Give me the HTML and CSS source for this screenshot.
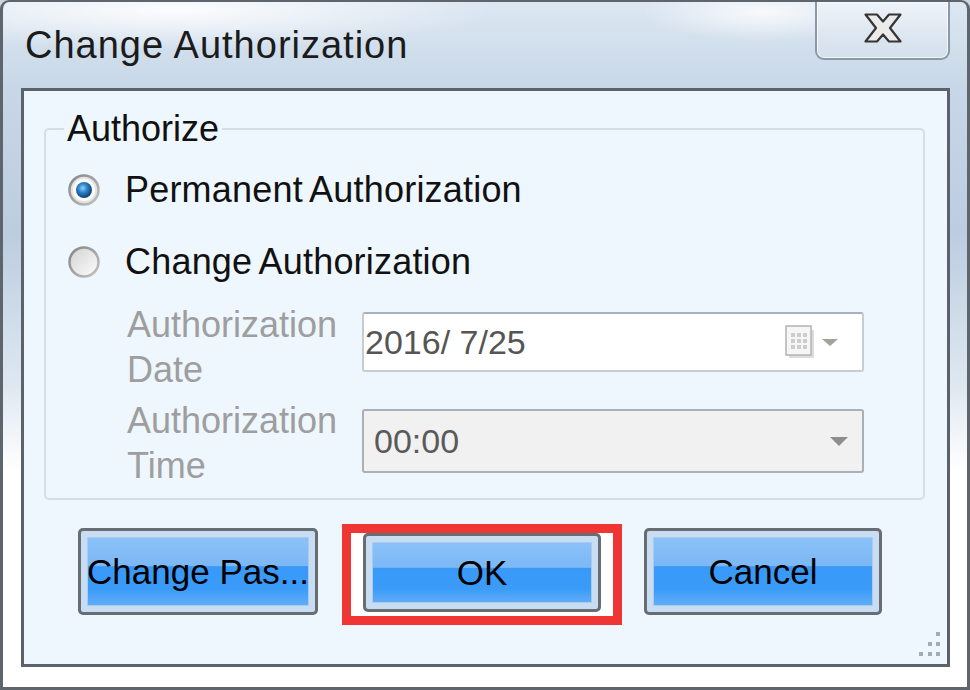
FILE: index.html
```html
<!DOCTYPE html>
<html lang="en">
<head>
  <meta charset="UTF-8">
  <title>Change Authorization</title>
  <link rel="stylesheet" href="styles.css">
</head>
<body>
  <div class="window">
    <div class="titlebar">
      <div class="title">Change Authorization</div>
      <div class="close">
        <svg width="38" height="30" viewBox="0 0 38 30">
          <polygon points="1.5,1.5 13,1.5 19,8.5 25,1.5 36.5,1.5 26,15 36.5,28.5 25,28.5 19,21.5 13,28.5 1.5,28.5 12,15" fill="#ebebeb" stroke="#353535" stroke-width="2.2" stroke-linejoin="round"/>
        </svg>
      </div>
    </div>

    <div class="client">
      <fieldset class="group">
        <legend>Authorize</legend>

        <div class="option first">
          <svg class="radio" width="32" height="32" viewBox="0 0 32 32">
            <defs>
              <radialGradient id="dot" cx="42%" cy="38%" r="65%">
                <stop offset="0" stop-color="#8fd0f8"/>
                <stop offset=".45" stop-color="#2a80c9"/>
                <stop offset="1" stop-color="#0e3a6c"/>
              </radialGradient>
              <linearGradient id="ring" x1="0" y1="0" x2="1" y2="1">
                <stop offset="0" stop-color="#858585"/>
                <stop offset="1" stop-color="#c2c2c2"/>
              </linearGradient>
            </defs>
            <circle cx="16" cy="16" r="14.5" fill="#e4e4e4" stroke="url(#ring)" stroke-width="2.5"/>
            <circle cx="16" cy="16" r="11" fill="#fbfbfb"/>
            <circle cx="16" cy="16" r="8" fill="url(#dot)"/>
          </svg>
          <span>Permanent Authorization</span>
        </div>

        <div class="option second">
          <svg class="radio" width="32" height="32" viewBox="0 0 32 32">
            <defs>
              <linearGradient id="fill" x1="0" y1="0" x2="1" y2="1">
                <stop offset="0" stop-color="#d2d2d2"/>
                <stop offset="1" stop-color="#fdfdfd"/>
              </linearGradient>
            </defs>
            <circle cx="16" cy="16" r="14.5" fill="url(#fill)" stroke="url(#ring)" stroke-width="2.5"/>
          </svg>
          <span>Change Authorization</span>
        </div>

        <div class="fields">
          <div class="label label-date">Authorization Date</div>
          <div class="date">
            <span class="value">2016/ 7/25</span>
            <svg class="cal" width="30" height="34" viewBox="0 0 30 34">
              <rect x="4" y="5" width="25" height="28" fill="#dcdcdc"/>
              <rect x="1" y="1" width="25" height="29" fill="#f6f6f6" stroke="#b3b3b3" stroke-width="1.5"/>
              <g fill="#cdcdcd">
                <rect x="6" y="8" width="4" height="4"/><rect x="12" y="8" width="4" height="4"/><rect x="18" y="8" width="4" height="4"/>
                <rect x="6" y="14" width="4" height="4"/><rect x="12" y="14" width="4" height="4"/><rect x="18" y="14" width="4" height="4"/>
                <rect x="6" y="20" width="4" height="4"/><rect x="12" y="20" width="4" height="4"/><rect x="18" y="20" width="4" height="4"/>
              </g>
            </svg>
            <svg class="arrow-small" width="16" height="7" viewBox="0 0 16 7">
              <polygon points="0,0 16,0 8,7" fill="#a3a39a"/>
            </svg>
          </div>

          <div class="label">Authorization Time</div>
          <div class="time">
            <span class="value">00:00</span>
            <svg width="18" height="9" viewBox="0 0 18 9">
              <polygon points="0,0 18,0 9,9" fill="#8e8e8e"/>
            </svg>
          </div>
        </div>
      </fieldset>

      <div class="actions">
        <button class="btn">Change Pas...</button>
        <div class="mark">
          <button class="btn btn-ok">OK</button>
        </div>
        <button class="btn btn-cancel">Cancel</button>
      </div>

      <svg class="grip" width="22" height="24" viewBox="0 0 22 24">
        <g fill="#a3abb3">
          <rect x="17" y="0" width="4" height="4"/>
          <rect x="9" y="10" width="4" height="4"/><rect x="17" y="10" width="4" height="4"/>
          <rect x="0" y="20" width="4" height="4"/><rect x="9" y="20" width="4" height="4"/><rect x="17" y="20" width="4" height="4"/>
        </g>
      </svg>
    </div>
  </div>
</body>
</html>
```

FILE: styles.css
```css
body {
  margin: 0;
  font-family: "Liberation Sans", Arial, sans-serif;
  background: #c8d6e5;
}

.window {
  box-sizing: border-box;
  width: 970px;
  height: 690px;
  border: 3px solid #5e656c;
  border-top-width: 2px;
  border-radius: 9px 9px 0 0;
  background:
    radial-gradient(ellipse 320px 40px at 170px 8px, rgba(255,255,255,.9), rgba(255,255,255,0)),
    radial-gradient(ellipse 120px 30px at 760px 10px, rgba(255,255,255,.8), rgba(255,255,255,0)),
    linear-gradient(#dce7f2 0, #c7d7e7 88px, #bccde0 230px, #dde7f1 380px, #ffffff 470px);
  display: flex;
  flex-direction: column;
}

/* title bar */
.titlebar {
  height: 86px;
  display: flex;
  justify-content: space-between;
  align-items: flex-start;
}

.title {
  margin: 22px 0 0 22px;
  font-size: 38px;
  line-height: 42px;
  letter-spacing: 1px;
  color: #1b1b1b;
}

.close {
  box-sizing: border-box;
  width: 135px;
  height: 58px;
  margin-right: 17px;
  padding-bottom: 4px;
  border: 2px solid #8b99a7;
  border-top: 0;
  border-radius: 0 0 9px 9px;
  background: linear-gradient(#edf3f9, #d3dfec);
  box-shadow: inset 0 0 0 1px rgba(255,255,255,.7);
  display: flex;
  align-items: center;
  justify-content: center;
}

/* client area */
.client {
  position: relative;
  box-sizing: border-box;
  height: 579px;
  margin: 0 17px 0 18px;
  border: 3px solid #5b6269;
  background: #eef6fe;
}

.group {
  box-sizing: border-box;
  width: 881px;
  margin: 20px 0 0 20px;
  padding: 0 0 10px;
  border: 2px solid #d5dde5;
  border-radius: 5px;
}

legend {
  margin-left: 18px;
  padding: 0 3px;
  font-size: 36px;
  line-height: 36px;
  color: #111;
}

.option {
  display: flex;
  align-items: center;
  height: 40px;
  margin-left: 22px;
  font-size: 36px;
  word-spacing: -2px;
  letter-spacing: 0.2px;
  color: #111;
}

.option.first {
  margin-top: 23px;
}

.option.second {
  margin-top: 32px;
}

.radio {
  margin-right: 25px;
  flex-shrink: 0;
}

.fields {
  display: grid;
  grid-template-columns: 235px 502px;
  align-items: start;
  margin: 20px 0 0 81px;
}

.label {
  font-size: 36px;
  line-height: 45px;
  height: 90px;
  color: #9e9e9e;
}

.label-date {
  height: 96px;
}

.date {
  box-sizing: border-box;
  height: 60px;
  margin-top: 10px;
  padding: 0 24px 0 1px;
  background: #fff;
  border: 2px solid #c6ccd2;
  border-top-color: #aab2b9;
  border-radius: 3px;
  display: flex;
  align-items: center;
  font-size: 34px;
  color: #555;
}

.date .value,
.time .value {
  flex: 1;
}

.cal {
  margin-right: 7px;
}

.time {
  box-sizing: border-box;
  height: 64px;
  margin-top: 11px;
  padding: 0 14px 0 10px;
  background: #f1f1f1;
  border: 2px solid #a9b0b7;
  border-radius: 3px;
  display: flex;
  align-items: center;
  font-size: 34px;
  color: #5a5a5a;
}

/* buttons */
.actions {
  display: flex;
  align-items: flex-start;
  margin: 24px 0 0 54px;
}

.btn {
  box-sizing: border-box;
  width: 240px;
  height: 87px;
  margin-top: 4px;
  padding: 0;
  border: 3px solid #686d73;
  border-radius: 5px;
  background: linear-gradient(#8ec4f8 0%, #7cb8f6 43%, #3899f9 44%, #3a9bf8 72%, #72b5f6 100%);
  box-shadow: inset 0 0 0 6px #c8ddf2, inset 0 0 0 7px #a9cbee;
  font-family: "Liberation Sans", Arial, sans-serif;
  font-size: 35px;
  color: #000;
  white-space: nowrap;
  overflow: hidden;
}

.mark {
  margin-left: 24px;
  padding: 0 12px 4px;
  border: 9px solid #f03535;
  background: #fff;
}

.btn-ok {
  width: 238px;
  height: 79px;
  margin-top: 0;
}

.btn-cancel {
  margin-left: 22px;
  width: 238px;
}

.grip {
  position: absolute;
  right: 6px;
  bottom: 8px;
}
```
